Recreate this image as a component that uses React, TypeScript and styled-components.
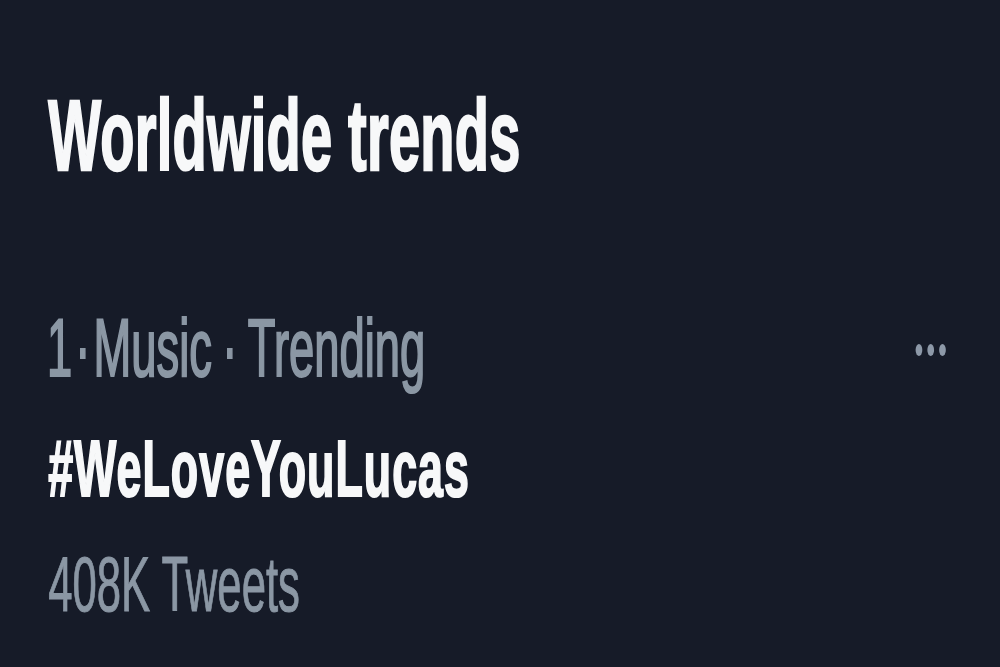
import React from "react";
import styled, { createGlobalStyle } from "styled-components";

const GlobalStyle = createGlobalStyle`
  html, body {
    margin: 0;
    padding: 0;
    background: #161b28;
    overflow: hidden;
  }
  #root {
    width: 1000px;
    height: 667px;
    overflow: hidden;
  }
`;

const SQUASH = 0.56;

const Page = styled.div`
  width: 1000px;
  height: 667px;
  background: #161b28;
  overflow: hidden;
`;

/* The screenshot is horizontally squeezed; lay out at natural width and squeeze once. */
const Squeezed = styled.div<{ $scale: number }>`
  width: ${(p) => 1000 / p.$scale}px;
  height: 667px;
  transform: scaleX(${(p) => p.$scale});
  transform-origin: left top;
  box-sizing: border-box;
  padding: 85px 97px 0 86px;
  display: flex;
  flex-direction: column;
  font-family: "Liberation Sans", Arial, sans-serif;
`;

const Title = styled.h2`
  margin: 0 0 123px;
  font-size: 100px;
  line-height: 100px;
  font-weight: 700;
  letter-spacing: 0.4px;
  color: #f7f8f9;
  -webkit-text-stroke: 2.4px #f7f8f9;
  white-space: nowrap;
`;

const Trend = styled.div`
  display: flex;
  flex-direction: column;
`;

const TopRow = styled.div`
  display: flex;
  align-items: flex-start;
  justify-content: space-between;
`;

const Context = styled.div`
  display: flex;
  font-size: 81px;
  line-height: 81px;
  font-weight: 400;
  color: #8b97a4;
  -webkit-text-stroke: 2.2px #8b97a4;
  white-space: nowrap;
`;

const Rank = styled.span`
  margin-left: -2px;
`;

const Sep = styled.span<{ $width: number }>`
  display: inline-block;
  width: ${(p) => p.$width}px;
  text-align: center;
`;

const Count = styled.div`
  margin-top: 36px;
  font-size: 78px;
  line-height: 78px;
  font-weight: 400;
  color: #8b97a4;
  -webkit-text-stroke: 1px #8b97a4;
  white-space: nowrap;
`;

const Hashtag = styled.div`
  margin-top: 40px;
  font-size: 80px;
  line-height: 80px;
  font-weight: 700;
  letter-spacing: 1.8px;
  color: #f7f8f9;
  -webkit-text-stroke: 2.2px #f7f8f9;
  white-space: nowrap;
`;

const MoreButton = styled.button`
  margin-top: 36px;
  padding: 0;
  border: 0;
  background: none;
  display: flex;
  gap: 9px;
  cursor: pointer;
`;

const Dot = styled.span`
  width: 12px;
  height: 12px;
  border-radius: 50%;
  background: #8d99a8;
`;

export default function App() {
  return (
    <Page>
      <GlobalStyle />
      <Squeezed $scale={SQUASH}>
        <Title>Worldwide trends</Title>
        <Trend>
          <TopRow>
            <Context>
              <Rank>1</Rank>
              <Sep $width={38}>·</Sep>
              <span>Music</span>
              <Sep $width={64}>·</Sep>
              <span>Trending</span>
            </Context>
            <MoreButton aria-label="More">
              <Dot />
              <Dot />
              <Dot />
            </MoreButton>
          </TopRow>
          <Hashtag>#WeLoveYouLucas</Hashtag>
          <Count>408K Tweets</Count>
        </Trend>
      </Squeezed>
    </Page>
  );
}
